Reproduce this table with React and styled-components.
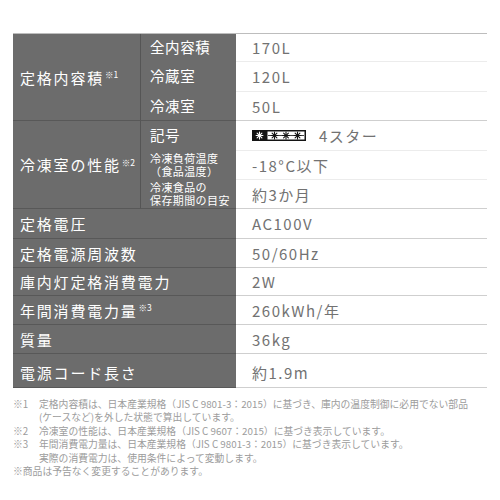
import React from "react";
import styled, { createGlobalStyle } from "styled-components";

const Global = createGlobalStyle`
  html, body { margin: 0; padding: 0; background: #fff; }
  body { font-family: "Noto Sans CJK JP", "Noto Sans", sans-serif; }
  * { box-sizing: border-box; }
`;

const Page = styled.div`
  width: 500px;
  height: 500px;
  padding: 33px 13px 0 13px;
  display: flex;
  flex-direction: column;
`;

const Table = styled.div`
  display: grid;
  grid-template-columns: 128px 95px 251px;
  border-top: 1px solid #bdbdbd;
`;

const Label = styled.div`
  grid-column: ${(p) => (p.$wide ? "1 / span 2" : "1")};
  grid-row: span ${(p) => p.$span || 1};
  background: #6c6c6c;
  color: #fff;
  font-size: 15px;
  letter-spacing: 1.8px;
  display: flex;
  align-items: center;
  padding-left: 7px;
  border-bottom: 1px solid #585858;
  border-right: ${(p) => (p.$wide ? "none" : "1px solid #555")};
  white-space: nowrap;
`;

const Sup = styled.sup`
  font-size: 8.5px;
  letter-spacing: 0;
  vertical-align: top;
  position: relative;
  top: -3px;
  margin-left: 1px;
`;

const SubLabel = styled.div`
  grid-column: 2;
  height: ${(p) => p.$h}px;
  background: #6c6c6c;
  color: #fff;
  font-size: ${(p) => (p.$small ? "11px" : "14.5px")};
  line-height: ${(p) => (p.$small ? "13px" : "1")};
  letter-spacing: ${(p) => (p.$small ? "0.4px" : "0.6px")};
  display: flex;
  flex-direction: column;
  justify-content: center;
  padding-left: ${(p) => (p.$small ? "9px" : "9px")};
  border-bottom: 1px solid ${(p) => (p.$end ? "#585858" : "#6c6c6c")};
  white-space: nowrap;
`;

const Value = styled.div`
  grid-column: 3;
  height: ${(p) => p.$h}px;
  color: #727272;
  font-size: 15px;
  letter-spacing: 1.5px;
  display: flex;
  align-items: center;
  gap: 13px;
  padding-left: 16px;
  padding-top: ${(p) => p.$pt || 0}px;
  border-bottom: 1px solid ${(p) => (p.$end ? "#cfcfcf" : "#ececec")};
  white-space: nowrap;
`;

const Notes = styled.div`
  margin-top: 10px;
  color: #9c9c9c;
  font-size: 9.8px;
  line-height: 13.4px;
  display: grid;
  grid-template-columns: 26px 1fr;
`;

const NoteKey = styled.div`
  white-space: nowrap;
`;

const NoteText = styled.div`
  white-space: nowrap;
  grid-column: ${(p) => (p.$full ? "1 / span 2" : "2")};
`;

const StarMark = () => (
  <svg width="54" height="11" viewBox="0 0 54 11">
    <rect x="0" y="0" width="54" height="11" fill="#141414" />
    <Asterisk cx={7.5} cy={5.5} color="#fff" />
    <rect x="15.5" y="1.5" width="37" height="8" fill="#fff" />
    <line x1="16" y1="5.5" x2="52" y2="5.5" stroke="#141414" strokeWidth="0.8" />
    <Asterisk cx={22.5} cy={5.5} color="#141414" />
    <Asterisk cx={34} cy={5.5} color="#141414" />
    <Asterisk cx={45.5} cy={5.5} color="#141414" />
  </svg>
);

function Asterisk({ cx, cy, color }) {
  const r = 3.4;
  const d = r * 0.7071;
  return (
    <g stroke={color} strokeWidth="1.1" strokeLinecap="round">
      <line x1={cx - r} y1={cy} x2={cx + r} y2={cy} />
      <line x1={cx} y1={cy - r} x2={cx} y2={cy + r} />
      <line x1={cx - d} y1={cy - d} x2={cx + d} y2={cy + d} />
      <line x1={cx - d} y1={cy + d} x2={cx + d} y2={cy - d} />
    </g>
  );
}

const Star = styled.span`
  color: #727272;
`;

const groups = [
  {
    label: "定格内容積",
    sup: "※1",
    subs: [
      { k: "全内容積", v: "170L", h: 28 },
      { k: "冷蔵室", v: "120L", h: 30 },
      { k: "冷凍室", v: "50L", h: 29 },
    ],
  },
  {
    label: "冷凍室の性能",
    sup: "※2",
    subs: [
      { k: "記号", v: "star", h: 30 },
      { k: ["冷凍負荷温度", "（食品温度）"], v: "-18°C以下", h: 29, small: true },
      { k: ["冷凍食品の", "保存期間の目安"], v: "約3か月", h: 29, small: true },
    ],
  },
];

const singles = [
  { k: "定格電圧", v: "AC100V", h: 30 },
  { k: "定格電源周波数", v: "50/60Hz", h: 29 },
  { k: "庫内灯定格消費電力", v: "2W", h: 28 },
  { k: "年間消費電力量", sup: "※3", v: "260kWh/年", h: 29 },
  { k: "質量", v: "36kg", h: 29 },
  { k: "電源コード長さ", v: "約1.9m", h: 34, pt: 4 },
];

export default function App() {
  return (
    <>
      <Global />
      <Page>
        <Table>
          {groups.map((g) => (
            <React.Fragment key={g.label}>
              <Label $span={g.subs.length}>
                {g.label}
                <Sup>{g.sup}</Sup>
              </Label>
              {g.subs.map((s, i) => {
                const end = i === g.subs.length - 1;
                return (
                  <React.Fragment key={i}>
                    <SubLabel $h={s.h} $small={s.small} $end={end}>
                      {Array.isArray(s.k) ? s.k.map((t) => <span key={t}>{t}</span>) : s.k}
                    </SubLabel>
                    <Value $h={s.h} $end={end}>
                      {s.v === "star" ? (
                        <>
                          <StarMark />
                          <Star>4スター</Star>
                        </>
                      ) : (
                        s.v
                      )}
                    </Value>
                  </React.Fragment>
                );
              })}
            </React.Fragment>
          ))}
          {singles.map((s) => (
            <React.Fragment key={s.k}>
              <Label $wide style={{ height: s.h, paddingTop: s.pt || 0 }}>
                {s.k}
                {s.sup && <Sup>{s.sup}</Sup>}
              </Label>
              <Value $h={s.h} $end $pt={s.pt}>
                {s.v}
              </Value>
            </React.Fragment>
          ))}
        </Table>
        <Notes>
          <NoteKey>※1</NoteKey>
          <NoteText>定格内容積は、日本産業規格（JIS C 9801-3：2015）に基づき、庫内の温度制御に必用でない部品</NoteText>
          <NoteText>(ケースなど)を外した状態で算出しています。</NoteText>
          <NoteKey>※2</NoteKey>
          <NoteText>冷凍室の性能は、日本産業規格（JIS C 9607：2015）に基づき表示しています。</NoteText>
          <NoteKey>※3</NoteKey>
          <NoteText>年間消費電力量は、日本産業規格（JIS C 9801-3：2015）に基づき表示しています。</NoteText>
          <NoteText>実際の消費電力は、使用条件によって変動します。</NoteText>
          <NoteText $full>※商品は予告なく変更することがあります。</NoteText>
        </Notes>
      </Page>
    </>
  );
}
